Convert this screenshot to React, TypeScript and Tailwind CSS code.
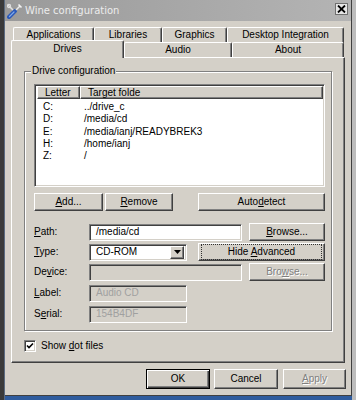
import React from "react"

const raised =
  "border border-t-white border-l-white border-r-[#404040] border-b-[#404040] shadow-[inset_-1px_-1px_0_#808080]"
const sunken =
  "border border-t-[#808080] border-l-[#808080] border-r-white border-b-white shadow-[inset_1px_1px_0_#404040,inset_-1px_-1px_0_#d4d0c8]"

function Btn(props: any) {
  const base = props.def
    ? "border border-black shadow-[inset_1px_1px_0_#fff,inset_-1px_-1px_0_#404040,inset_-2px_-2px_0_#808080]"
    : raised
  return (
    <div
      className={`${base} ${props.className} flex items-center justify-center bg-[#d4d0c8] ${
        props.disabled ? "text-[#808080] [text-shadow:1px_1px_0_#fff]" : "text-black"
      }`}
    >
      {props.focus ? (
        <div className="w-full h-full m-[2px] border border-dotted border-[#303030] flex items-center justify-center">
          <span>{props.children}</span>
        </div>
      ) : (
        <span>{props.children}</span>
      )}
    </div>
  )
}

function Field(props: any) {
  return (
    <div
      className={`${sunken} ${props.className} h-[17px] flex items-center px-[6px] ${
        props.disabled ? "bg-[#d4d0c8] text-[#a0a0a0]" : "bg-white text-black"
      }`}
    >
      {props.children}
    </div>
  )
}

function Tab(props: any) {
  return (
    <div
      className={`${props.className} border-t border-l border-r border-t-white border-l-white border-r-[#404040] shadow-[inset_-1px_0_0_#808080] rounded-t-[2px] bg-[#d4d0c8] flex items-center justify-center`}
    >
      {props.children}
    </div>
  )
}

function Row(props: any) {
  return (
    <div className={`flex items-center h-[18px] ${props.className ?? ""}`}>
      <div className="w-[55px]">{props.label}</div>
      {props.children}
    </div>
  )
}

const drives = [
  ["C:", "../drive_c"],
  ["D:", "/media/cd"],
  ["E:", "/media/ianj/READYBREK3"],
  ["H:", "/home/ianj"],
  ["Z:", "/"],
]

export default function App() {
  return (
    <div className="w-[356px] h-[400px] flex bg-[#bdbdbd] overflow-hidden font-['Liberation_Sans',Arial,sans-serif] text-[10px] leading-[12px]">
      <div className="w-[5px] h-full bg-[#3a3a3a] border-r border-[#5a6a80]" />
      <div className="w-[347px] flex flex-col">
        <div className="h-[396px] bg-[#d4d0c8] border-r border-b border-[#404040] flex flex-col">
          {/* title bar */}
          <div className="h-[21px] bg-gradient-to-r from-[#9a9a9a] to-[#b4b4b4] flex items-center pl-[2px] pr-[3px]">
            <svg width="16" height="16" viewBox="0 0 16 16">
              <path d="M2 14 L8 8" stroke="#2a58b8" strokeWidth="4" strokeLinecap="round" />
              <path d="M2.5 13.5 L7 9" stroke="#7fa8e8" strokeWidth="1.2" strokeLinecap="round" />
              <path d="M9 7 L13 3" stroke="#e8e8e8" strokeWidth="1.6" />
              <path d="M11.5 1.5 L14.5 4.5" stroke="#f4f4f4" strokeWidth="1.6" />
              <path d="M1 2 L6 7" stroke="#e0e0e0" strokeWidth="1.6" />
              <circle cx="2" cy="3" r="1.6" fill="none" stroke="#e0e0e0" strokeWidth="1.2" />
            </svg>
            <span className="ml-[2px] text-[#ececec] font-['DejaVu_Sans',sans-serif] text-[10px]">
              Wine configuration
            </span>
            <div className="ml-auto w-[13px] h-[12px] -mt-[4px] bg-[#e6e6e6] border border-[#707070] flex items-center justify-center">
              <svg width="9" height="8" viewBox="0 0 9 8">
                <path d="M1 0.5 L8 7.5 M8 0.5 L1 7.5" stroke="#000" strokeWidth="1.8" />
              </svg>
            </div>
          </div>

          {/* tabs */}
          <div className="ml-[6px] mt-[6px] w-[334px] flex flex-col">
            <div className="flex h-[16px] pl-[2px]">
              <Tab className="w-[81px] pb-[2px]">Applications</Tab>
              <Tab className="w-[68px] pb-[2px]">Libraries</Tab>
              <Tab className="w-[65px] pb-[2px]">Graphics</Tab>
              <Tab className="w-[117px] pb-[2px]">Desktop Integration</Tab>
            </div>
            <div className="flex items-end -mt-[3px]">
              <Tab className="w-[113px] h-[18px] relative z-10 pb-[2px]">Drives</Tab>
              <Tab className="w-[108px] h-[15px] mb-[1px]">Audio</Tab>
              <Tab className="w-[112px] h-[15px] mb-[1px]">About</Tab>
            </div>

            {/* pane */}
            <div className={`-mt-[1px] h-[306px] ${raised} bg-[#d4d0c8] flex flex-col`}>
              <div className="relative ml-[12px] mt-[13px] w-[308px] h-[260px] border border-[#808080] shadow-[inset_1px_1px_0_#fff,1px_1px_0_#fff] pl-[9px] pt-[12px]">
                <span className="absolute -top-[7px] left-[6px] px-[1px] bg-[#d4d0c8]">
                  Drive configuration
                </span>

                <div className={`w-[291px] h-[103px] ${sunken} bg-white p-[1px] flex flex-col`}>
                  <div className="flex h-[13px] ml-[1px] mb-[2px]">
                    <div className={`w-[43px] ${raised} bg-[#d4d0c8] pl-[7px] overflow-hidden whitespace-nowrap`}>
                      <div className="w-[29px] overflow-hidden">Letter</div>
                    </div>
                    <div className={`flex-1 ${raised} bg-[#d4d0c8] pl-[7px]`}>Target folde</div>
                  </div>
                  {drives.map((d) => (
                    <div key={d[0]} className="flex h-[12.3px] items-center">
                      <div className="w-[48px] pl-[7px]">{d[0]}</div>
                      <div>{d[1]}</div>
                    </div>
                  ))}
                </div>

                <div className="flex mt-[6px] h-[18px]">
                  <Btn className="w-[69px] h-[18px]">
                    <u>A</u>dd...
                  </Btn>
                  <Btn className="w-[68px] h-[18px] ml-[2px]">
                    <u>R</u>emove
                  </Btn>
                  <Btn className="w-[127px] h-[18px] ml-[25px]">
                    Auto<u>d</u>etect
                  </Btn>
                </div>

                <Row className="mt-[12px]" label={<><u>P</u>ath:</>}>
                  <Field className="w-[153px]">/media/cd</Field>
                  <Btn className="w-[76px] h-[18px] ml-[7px]">
                    <u>B</u>rowse...
                  </Btn>
                </Row>
                <Row className="mt-[2px]" label={<><u>T</u>ype:</>}>
                  <div className={`${sunken} w-[98px] h-[17px] bg-white flex items-center pl-[6px] p-[2px]`}>
                    <span className="flex-1">CD-ROM</span>
                    <div className={`${raised} w-[14px] h-[13px] bg-[#d4d0c8] flex items-center justify-center`}>
                      <svg width="7" height="4" viewBox="0 0 7 4">
                        <path d="M0 0 H7 L3.5 4 Z" fill="#000" />
                      </svg>
                    </div>
                  </div>
                  <Btn focus className="w-[127px] h-[18px] ml-[11px]">
                    Hide <u>A</u>dvanced
                  </Btn>
                </Row>
                <Row className="mt-[2px]" label={<>De<u>v</u>ice:</>}>
                  <Field disabled className="w-[153px]"></Field>
                  <Btn disabled className="w-[76px] h-[18px] ml-[7px]">
                    Bro<u>w</u>se...
                  </Btn>
                </Row>
                <Row className="mt-[3px]" label={<><u>L</u>abel:</>}>
                  <Field disabled className="w-[98px]">Audio CD</Field>
                </Row>
                <Row className="mt-[3px]" label={<>S<u>e</u>rial:</>}>
                  <Field disabled className="w-[98px]">154B4DF</Field>
                </Row>
              </div>

              <div className="flex items-center ml-[12px] mt-[9px]">
                <div className={`${sunken} w-[12px] h-[12px] bg-white flex items-center justify-center`}>
                  <svg width="8" height="8" viewBox="0 0 8 8">
                    <path d="M1 3.5 L3 5.5 L7 1.5" stroke="#000" strokeWidth="1.6" fill="none" />
                  </svg>
                </div>
                <span className="ml-[5px]">
                  Show <u>d</u>ot files
                </span>
              </div>
            </div>
          </div>

          {/* bottom buttons */}
          <div className="flex mt-[6px] ml-[141px]">
            <Btn def className="w-[64px] h-[20px]">OK</Btn>
            <Btn className="w-[64px] h-[20px] ml-[4px]">Cancel</Btn>
            <Btn disabled className="w-[63px] h-[20px] ml-[5px]">
              <u>A</u>pply
            </Btn>
          </div>
        </div>
        <div className="flex-1 bg-[#2f5c9e]" />
      </div>
      <div className="w-[4px] h-full bg-[#bdbdbd]" />
    </div>
  )
}
